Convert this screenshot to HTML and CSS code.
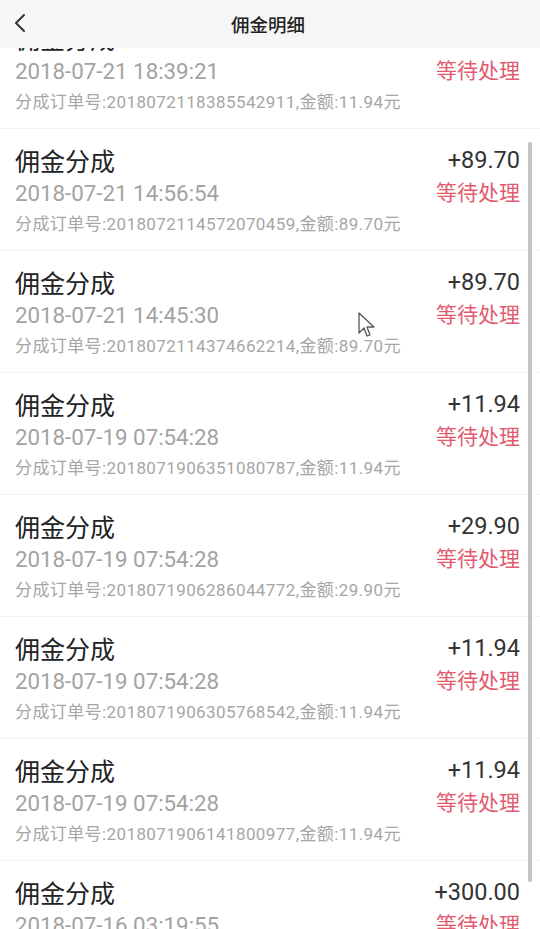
FILE: index.html
```html
<!DOCTYPE html>
<html lang="zh-CN">
<head>
<meta charset="utf-8">
<title>佣金明细</title>
<link rel="stylesheet" href="styles.css">
</head>
<body>
<div class="app">
  <header class="topbar">
    <span class="back">
      <svg width="14" height="20" viewBox="0 0 14 20"><path d="M11 2 L3 10 L11 18" fill="none" stroke="#333" stroke-width="2" stroke-linecap="round" stroke-linejoin="round"/></svg>
    </span>
    <h1 class="title">佣金明细</h1>
  </header>
  <main class="viewport">
    <ul class="list">
      <li class="item">
        <div class="left">
          <div class="name">佣金分成</div>
          <div class="date">2018-07-21 18:39:21</div>
          <div class="order">分成订单号:2018072118385542911,金额:11.94元</div>
        </div>
        <div class="right">
          <div class="amount">+11.94</div>
          <div class="status">等待处理</div>
        </div>
      </li>
      <li class="item">
        <div class="left">
          <div class="name">佣金分成</div>
          <div class="date">2018-07-21 14:56:54</div>
          <div class="order">分成订单号:2018072114572070459,金额:89.70元</div>
        </div>
        <div class="right">
          <div class="amount">+89.70</div>
          <div class="status">等待处理</div>
        </div>
      </li>
      <li class="item">
        <div class="left">
          <div class="name">佣金分成</div>
          <div class="date">2018-07-21 14:45:30</div>
          <div class="order">分成订单号:2018072114374662214,金额:89.70元</div>
        </div>
        <div class="right">
          <div class="amount">+89.70</div>
          <div class="status">等待处理</div>
        </div>
      </li>
      <li class="item">
        <div class="left">
          <div class="name">佣金分成</div>
          <div class="date">2018-07-19 07:54:28</div>
          <div class="order">分成订单号:2018071906351080787,金额:11.94元</div>
        </div>
        <div class="right">
          <div class="amount">+11.94</div>
          <div class="status">等待处理</div>
        </div>
      </li>
      <li class="item">
        <div class="left">
          <div class="name">佣金分成</div>
          <div class="date">2018-07-19 07:54:28</div>
          <div class="order">分成订单号:2018071906286044772,金额:29.90元</div>
        </div>
        <div class="right">
          <div class="amount">+29.90</div>
          <div class="status">等待处理</div>
        </div>
      </li>
      <li class="item">
        <div class="left">
          <div class="name">佣金分成</div>
          <div class="date">2018-07-19 07:54:28</div>
          <div class="order">分成订单号:2018071906305768542,金额:11.94元</div>
        </div>
        <div class="right">
          <div class="amount">+11.94</div>
          <div class="status">等待处理</div>
        </div>
      </li>
      <li class="item">
        <div class="left">
          <div class="name">佣金分成</div>
          <div class="date">2018-07-19 07:54:28</div>
          <div class="order">分成订单号:2018071906141800977,金额:11.94元</div>
        </div>
        <div class="right">
          <div class="amount">+11.94</div>
          <div class="status">等待处理</div>
        </div>
      </li>
      <li class="item">
        <div class="left">
          <div class="name">佣金分成</div>
          <div class="date">2018-07-16 03:19:55</div>
          <div class="order">分成订单号:2018071603195512345,金额:300.00元</div>
        </div>
        <div class="right">
          <div class="amount">+300.00</div>
          <div class="status">等待处理</div>
        </div>
      </li>
    </ul>
    <div class="scrollbar"></div>
    <svg class="cursor" width="18" height="28" viewBox="0 0 18 28"><path d="M1 1 L1 21 L6 16 L9 24 L12 23 L9 15 L16 15 Z" fill="#fff" stroke="#555" stroke-width="1.3" stroke-linejoin="round"/></svg>
  </main>
</div>
</body>
</html>
```

FILE: styles.css
```css
* { box-sizing: border-box; }
html, body { margin: 0; padding: 0; background: #fff; }
body {
  font-family: Roboto, "Noto Sans CJK SC", sans-serif;
  width: 540px;
  height: 929px;
  overflow: hidden;
}
.app { display: flex; flex-direction: column; height: 929px; }
.topbar {
  position: relative;
  height: 48px;
  flex: none;
  background: #f6f6f6;
  display: flex;
  align-items: center;
  justify-content: center;
  z-index: 2;
}
.back {
  position: absolute;
  left: 13px;
  top: 13px;
  width: 14px;
  height: 20px;
  display: flex;
}
.title {
  margin: 0 0 0 -4px;
  font-size: 18.5px;
  font-weight: 500;
  color: #222;
  font-family: "Noto Sans CJK SC", sans-serif;
}
.viewport {
  position: relative;
  flex: 1;
  overflow: hidden;
}
.list {
  list-style: none;
  margin: -41px 0 0 0;
  padding: 0;
}
.item {
  height: 122px;
  padding: 14px 20px 0 15px;
  border-bottom: 1px solid #f4f4f4;
  display: flex;
  justify-content: space-between;
}
.name {
  font-family: "Noto Sans CJK SC", sans-serif;
  font-size: 25px;
  line-height: 34px;
  color: #222;
}
.date {
  font-size: 22.3px;
  line-height: 32px;
  color: #a3a3a3;
}
.order {
  font-size: 17px;
  line-height: 30px;
  color: #a6a6a6;
  letter-spacing: 0.4px;
}
.right { text-align: right; }
.amount {
  font-size: 23.5px;
  line-height: 34px;
  color: #333;
}
.status {
  font-family: "Noto Sans CJK SC", sans-serif;
  font-size: 21px;
  line-height: 28px;
  color: #e25a6e;
}
.scrollbar {
  position: absolute;
  right: 8px;
  top: 94px;
  width: 4px;
  height: 740px;
  background: #c4c4c4;
  border-radius: 2px;
}
.cursor {
  position: absolute;
  left: 358px;
  top: 264px;
}
```
